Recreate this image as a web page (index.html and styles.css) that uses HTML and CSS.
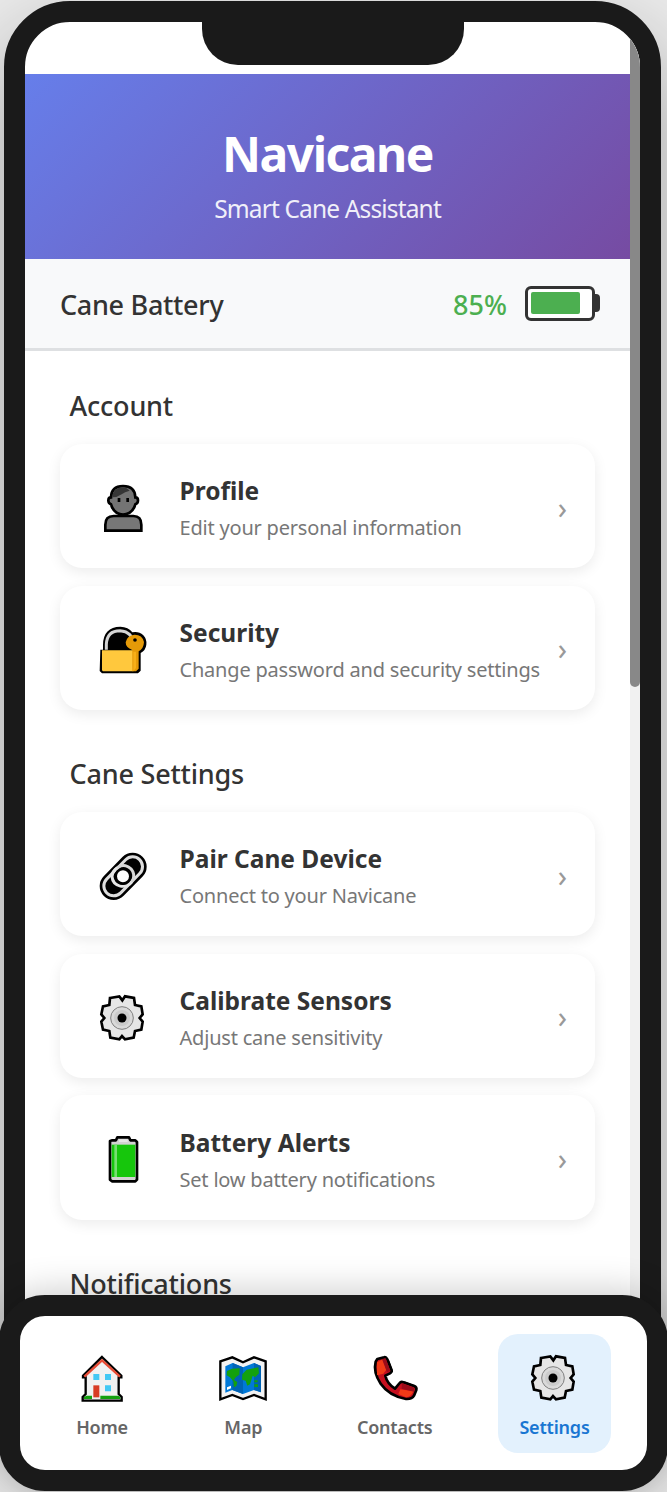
FILE: index.html
```html
<!DOCTYPE html>
<html lang="en">
<head>
<meta charset="utf-8">
<title>Navicane</title>
<link rel="stylesheet" href="styles.css">
</head>
<body>
<svg class="defs" aria-hidden="true">
  <symbol id="gear" viewBox="57 42 144 144">
    <path d="M90 54L118 49L127 61L135 49L162 54L165 75L184 79L188 103L179 114L188 125L184 149L165 153L161 173L135 178L126 168L118 178L91 173L88 153L69 149L64 125L73 114L64 103L69 79L88 75Z" fill="#e6e6e6" stroke="#000" stroke-width="8"/>
    <circle cx="126" cy="114" r="34" fill="#d9d9d9" stroke="#808080" stroke-width="3"/>
    <circle cx="126" cy="114" r="24" fill="#cbcbcb"/>
    <circle cx="126" cy="114" r="13.5"/>
  </symbol>
</svg>
<div class="phone">
  <div class="notch"></div>
  <div class="screen">
    <header class="header">
      <h1 class="brand">Navicane</h1>
      <p class="tagline">Smart Cane Assistant</p>
    </header>
    <div class="status">
      <span class="status-label">Cane Battery</span>
      <span class="status-value">85%</span>
      <span class="battery"><span class="battery-level"></span></span>
    </div>
    <main class="content">
      <section class="group">
        <h2 class="group-title">Account</h2>
        <div class="card">
          <svg class="icon" viewBox="57 42 144 144">
            <path d="M76 182V164Q76 138 101 138H160Q184 138 184 164V182Z" fill="#777" stroke="#000" stroke-width="8"/>
            <path d="M93 82Q94 48 129 48Q165 48 166 82Q174 82 174 91Q174 101 166 103Q158 132 129 134Q101 132 93 103Q85 101 85 91Q85 82 93 82Z" fill="#747474" stroke="#000" stroke-width="8"/>
            <path d="M97 82Q98 53 129 52Q142 53 149 62Q134 65 125 73Q113 82 97 82Z" fill="#363636"/>
            <path d="M117 84V96M143 84V96" stroke="#000" stroke-width="8"/>
          </svg>
          <div class="card-text"><h3 class="card-title">Profile</h3><p class="card-desc">Edit your personal information</p></div>
          <span class="chevron">›</span>
        </div>
        <div class="card">
          <svg class="icon" viewBox="57 42 144 144">
            <path d="M61 113H69V98Q70 45 121 44Q145 45 157 61Q176 57 190 70Q201 81 199 98Q197 115 182 123V176L174 184H66L59 177Z"/>
            <path d="M79 113V97Q81 56 120 56Q158 59 160 97V113" fill="none" stroke="#d4d4d4" stroke-width="9"/>
            <path d="M66 115H160V178H69L66 175Z" fill="#ffc83d"/>
            <path d="M157 114Q137 107 137 91Q141 70 164 68Q187 68 192 90Q191 110 176 118V170L168 178H157Z" fill="#e59a08"/>
            <path d="M160 119H168V168L160 178Z" fill="#f7af18"/>
            <circle cx="165" cy="84" r="5.5"/>
          </svg>
          <div class="card-text"><h3 class="card-title">Security</h3><p class="card-desc">Change password and security settings</p></div>
          <span class="chevron">›</span>
        </div>
      </section>
      <section class="group">
        <h2 class="group-title">Cane Settings</h2>
        <div class="card">
          <svg class="icon" viewBox="57 42 144 144">
            <g fill="none" stroke-linecap="round">
              <path d="M101 144L158 86" stroke="#000" stroke-width="84"/>
              <path d="M101 144L158 86" stroke="#dedede" stroke-width="68"/>
              <path d="M101 144L158 86" stroke="#000" stroke-width="50"/>
            </g>
            <path d="M101 102Q116 80 136 83Q157 89 161 109Q163 126 148 139" fill="none" stroke="#d7d7d7" stroke-width="9"/>
            <path d="M112 89Q97 98 96 116Q98 139 121 144Q140 148 155 131" fill="none" stroke="#e6e6e6" stroke-width="9"/>
            <circle cx="129" cy="115" r="22" fill="#fff" stroke="#000" stroke-width="8"/>
          </svg>
          <div class="card-text"><h3 class="card-title">Pair Cane Device</h3><p class="card-desc">Connect to your Navicane</p></div>
          <span class="chevron">›</span>
        </div>
        <div class="card">
          <svg class="icon"><use href="#gear"/></svg>
          <div class="card-text"><h3 class="card-title">Calibrate Sensors</h3><p class="card-desc">Adjust cane sensitivity</p></div>
          <span class="chevron">›</span>
        </div>
        <div class="card">
          <svg class="icon" viewBox="57 47 144 144">
            <path d="M90 62L97 60H108L112 51H147L151 60H166L171 65V178L166 183H96L90 178Z" fill="#d2d2d2" stroke="#000" stroke-width="8" stroke-linejoin="round"/>
            <path d="M117 61H143" stroke="#e7e7e7" stroke-width="8"/>
            <path d="M95 73H166V170H95Z" fill="#16c60c"/>
            <path d="M107 73V170" stroke="#77df72" stroke-width="8"/>
          </svg>
          <div class="card-text"><h3 class="card-title">Battery Alerts</h3><p class="card-desc">Set low battery notifications</p></div>
          <span class="chevron">›</span>
        </div>
      </section>
      <section class="group">
        <h2 class="group-title">Notifications</h2>
      </section>
    </main>
  </div>
  <div class="scrollbar"><div class="thumb"></div></div>
</div>
<nav class="nav">
  <a class="nav-item home">
    <svg class="icon" viewBox="234 282 144 144">
      <path d="M306 291L364 347V352H356V402L365 411V422H248V411L257 402V352H249V347Z" fill="#f1f1f1" stroke="#000" stroke-width="7"/>
      <path d="M253 350L306 301L360 350" fill="none" stroke="#e64b35" stroke-width="7"/>
      <path d="M252 417V411L260 407H276V417ZM301 407H355L361 412V417H301Z" fill="#13a10e"/>
      <path d="M280 376H298V412H280Z" fill="#d83b24"/>
      <path d="M280 342H298V360H280ZM315 342H333V360H315ZM315 376H333V394H315Z" fill="#42c8f4"/>
    </svg>
    <span class="nav-label">Home</span>
  </a>
  <a class="nav-item map">
    <svg class="icon" viewBox="657 282 144 144">
      <path d="M661 304L697 292L729 307L762 292L797 304V418L762 405L729 417L697 405L661 418Z" fill="#f3f3f3" stroke="#000" stroke-width="7"/>
      <path d="M676 319L698 309L729 322L762 309L783 318V397L762 390L729 402L697 390L676 398Z" fill="#0078d7"/>
      <path d="M698 309L729 322V402L697 390ZM762 309L783 318V397L762 390Z" fill="#0063b5"/>
      <path d="M681 333L696 326L719 325L718 344L707 352L702 360L712 366L709 378L702 382L700 364L690 352L680 346ZM727 343L740 329L775 322L777 340L765 352L758 347L750 373L742 377L737 362L726 359ZM763 361H773V367H763ZM763 373H774V381H763Z" fill="#13a10e"/>
      <path d="M681 382L693 377V385L681 390Z" fill="#fff"/>
    </svg>
    <span class="nav-label">Map</span>
  </a>
  <a class="nav-item contacts">
    <svg class="icon" viewBox="114 282 144 144">
      <path d="M133 297L153 292Q159 290 163 298L176 331Q177 337 171 340L157 347Q162 370 186 386L200 369Q204 363 212 367L244 378Q252 382 250 390L243 407Q237 418 219 417Q168 407 143 371Q120 337 128 305Z" fill="#c50f1f" stroke="#000" stroke-width="8" stroke-linejoin="round"/>
      <path d="M132 307L149 298L160 329L151 341L132 346ZM202 388L241 394Q235 411 219 412L196 402Z" fill="#f03a17"/>
      <path d="M147 297L158 295L172 333L162 337ZM207 370L245 384L243 395L206 386Z" fill="#9b0b19"/>
      <path d="M166 302L177 333M214 367L246 379" stroke="#000" stroke-width="5"/>
    </svg>
    <span class="nav-label">Contacts</span>
  </a>
  <a class="nav-item settings active">
    <svg class="icon"><use href="#gear"/></svg>
    <span class="nav-label">Settings</span>
  </a>
</nav>
</body>
</html>
```
FILE: styles.css
```css
* { box-sizing: border-box; margin: 0; padding: 0; }
body {
  position: relative;
  width: 667px;
  height: 1492px;
  overflow: hidden;
  background: #ebebeb;
  font-family: "Noto Sans", "Open Sans", sans-serif;
  color: #333;
}
.defs { position: absolute; width: 0; height: 0; }
.phone {
  position: relative;
  display: flex;
  width: 657px;
  height: 1450px;
  margin: 1px 0 0 4px;
  border: 21px solid #1a1a1a;
  border-radius: 66px;
  overflow: hidden;
  background: #fff;
  box-shadow: 0 34px 90px rgba(0, 0, 0, .3);
}
.notch {
  position: absolute;
  z-index: 2;
  top: -1px;
  left: 177px;
  width: 262px;
  height: 44px;
  border-radius: 0 0 36px 36px;
  background: #1a1a1a;
}
.screen { width: 605px; padding-top: 52px; }
.scrollbar { width: 10px; background: #f1f1f1; }
.thumb { height: 665px; border-radius: 0 0 5px 5px; background: #888; }
.header {
  height: 185px;
  padding-top: 48px;
  text-align: center;
  color: #fff;
  background: linear-gradient(135deg, #667eea 0%, #764ba2 100%);
}
.brand { font-size: 48px; line-height: 64px; font-weight: 700; letter-spacing: -1.5px; }
.tagline { margin-top: 6px; font-size: 24.5px; line-height: 34px; letter-spacing: -.85px; opacity: .9; }
.status {
  display: flex;
  align-items: center;
  height: 92px;
  padding: 0 30px 0 35px;
  background: #f8f9fa;
  border-bottom: 3px solid #dee0e2;
}
.status-label { flex: 1; font-size: 27px; font-weight: 550; letter-spacing: -.3px; margin-top: 1px; }
.status-value { font-size: 27px; font-weight: 550; letter-spacing: 0; color: #4caf50; margin: 1px 18px 0 0; }
.battery {
  position: relative;
  width: 70px;
  height: 35px;
  margin-right: 5px;
  padding: 3px;
  border: 3px solid #333;
  border-radius: 6px;
  background: #fff;
}
.battery::after {
  content: "";
  position: absolute;
  top: 5px;
  right: -8px;
  width: 6px;
  height: 18px;
  border-radius: 0 4px 4px 0;
  background: #333;
}
.battery-level { display: block; width: 85%; height: 22px; border-radius: 2px; background: #4caf50; }
.content { padding: 35px; }
.group { margin-bottom: 44px; }
.group-title { margin: 0 0 18px 9.5px; font-size: 27px; line-height: 40px; font-weight: 550; letter-spacing: -.2px; }
.card {
  display: flex;
  align-items: center;
  height: 124.3px;
  margin-bottom: 17.4px;
  padding: 0 28px 0 39px;
  border-radius: 22px;
  background: #fff;
  box-shadow: 0 4px 14px rgba(0, 0, 0, .08);
}
.icon { display: block; width: 48px; height: 48px; }
.card .icon { flex: none; margin: 4px 32.5px 0 0; }
.card-text { flex: 1; white-space: nowrap; padding-top: 6px; }
.card-title { font-size: 24.5px; line-height: 34px; font-weight: 700; letter-spacing: 0; }
.card-desc { margin-top: 4px; font-size: 20px; line-height: 32px; letter-spacing: -.2px; color: #777; }
.chevron { margin-top: 3px; font-size: 30px; line-height: 30px; color: #999; }
.nav {
  position: absolute;
  left: -1px;
  bottom: 1px;
  display: flex;
  justify-content: space-between;
  width: 669px;
  height: 196px;
  padding: 18px 36px 0 33px;
  border: 21px solid #1a1a1a;
  border-radius: 46px;
  background: #fff;
  box-shadow: 0 -4px 36px rgba(0, 0, 0, .2);
}
.nav-item {
  display: flex;
  flex-direction: column;
  align-items: center;
  width: 98px;
  height: 119px;
  padding-top: 20px;
  border-radius: 20px;
  color: #666;
}
.map { width: 96px; }
.contacts { width: 118px; }
.settings { width: 113px; }
.active { background: #e3f1fd; color: #1976d2; }
.nav-label { margin-top: 12px; font-size: 18px; line-height: 26px; font-weight: 600; letter-spacing: -.2px; }
```
